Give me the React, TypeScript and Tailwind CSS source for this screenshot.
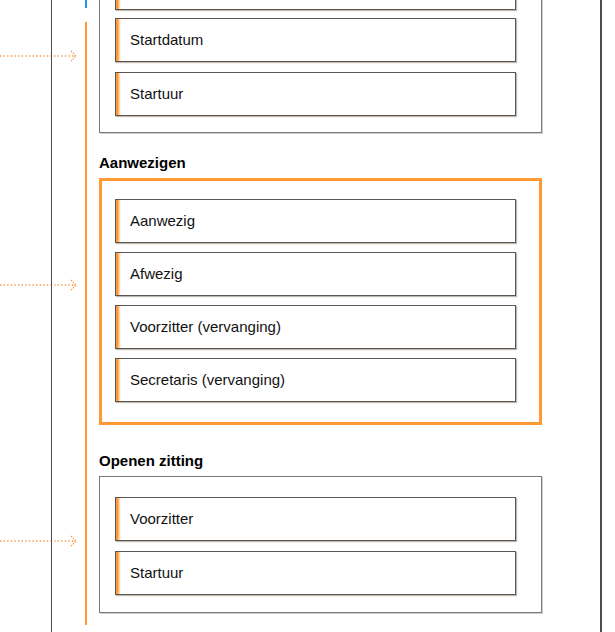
import React from 'react';

const Field: React.FC<{ label?: string; className?: string }> = ({ label, className }) => (
  <div
    className={`h-[44px] w-[401px] shrink-0 flex items-center pl-[14px] border border-[#5a5550] bg-[linear-gradient(to_right,#ff9933_0px,#ff9933_2px,#ffd2a6_3px,#ffffff_5px)] shadow-[1px_1px_1px_rgba(80,60,40,0.35)] text-[15px] text-[#111] ${className ?? ''}`}
  >
    {label}
  </div>
);

const Arrow: React.FC<{ top: string }> = ({ top }) => (
  <svg className={`absolute left-0 ${top}`} width="80" height="14" viewBox="0 0 80 14">
    <line x1="0" y1="7" x2="75" y2="7" stroke="#f59a45" strokeWidth="1.4" strokeDasharray="1.4 2.2" />
    <polyline points="71,2 76,7 71,12" fill="none" stroke="#f59a45" strokeWidth="1.3" strokeDasharray="1.4 1.2" />
  </svg>
);

const App: React.FC = () => {
  return (
    <div className="relative w-[615px] h-[632px] overflow-hidden bg-white font-['Liberation_Sans',Arial,sans-serif]">
      {/* connector arrows coming in from the left */}
      <Arrow top="top-[49px]" />
      <Arrow top="top-[278px]" />
      <Arrow top="top-[534px]" />

      <div className="relative ml-[51px] w-[551px] h-full border-l border-r-2 border-[#4d4d4d] flex">
        {/* step track */}
        <div className="w-[47px] shrink-0 flex flex-col pl-[33px]">
          <div className="w-[2px] h-[8px] bg-[#1e9be9]" />
          <div className="w-[2px] h-[603px] mt-[14px] bg-[#ff9933]" />
        </div>

        {/* content */}
        <div className="w-[443px] shrink-0 mt-[-50px] flex flex-col">
          <div className="border border-[#7a7a7a] shadow-[1px_1px_0_#cfcfcf] pl-[15px] pt-[15px] pb-[16px] flex flex-col gap-[10px]">
            <Field className="mb-[-2px]" />
            <Field label="Startdatum" />
            <Field label="Startuur" />
          </div>

          <h3 className="mt-[21px] mb-[6px] h-[18px] leading-[18px] text-[15px] font-bold text-black">Aanwezigen</h3>
          <div className="border-[3px] border-[#ff9933] pl-[13px] pt-[18px] pb-[20px] flex flex-col gap-[9px]">
            <Field label="Aanwezig" />
            <Field label="Afwezig" />
            <Field label="Voorzitter (vervanging)" />
            <Field label="Secretaris (vervanging)" />
          </div>

          <h3 className="mt-[27px] mb-[6px] h-[18px] leading-[18px] text-[15px] font-bold text-black">Openen zitting</h3>
          <div className="border border-[#7a7a7a] shadow-[1px_1px_0_#cfcfcf] pl-[15px] pt-[20px] pb-[17px] flex flex-col gap-[10px]">
            <Field label="Voorzitter" />
            <Field label="Startuur" />
          </div>
        </div>
      </div>
    </div>
  );
};

export default App;
